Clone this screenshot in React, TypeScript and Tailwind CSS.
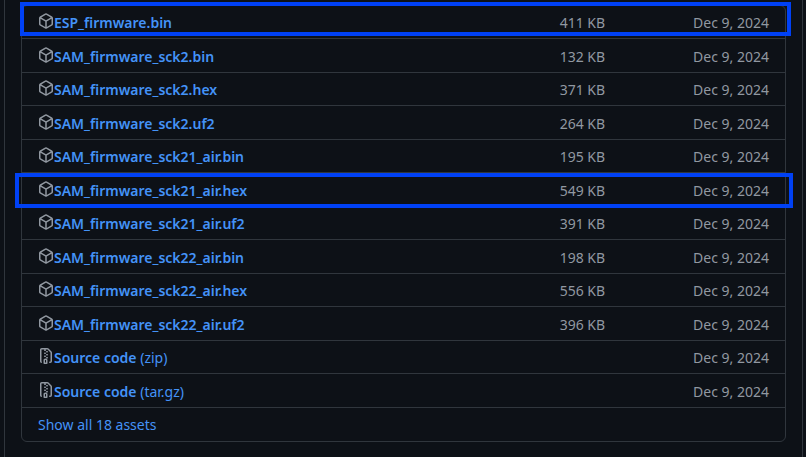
const assets = [
  { name: 'ESP_firmware.bin', size: '411 KB' },
  { name: 'SAM_firmware_sck2.bin', size: '132 KB' },
  { name: 'SAM_firmware_sck2.hex', size: '371 KB' },
  { name: 'SAM_firmware_sck2.uf2', size: '264 KB' },
  { name: 'SAM_firmware_sck21_air.bin', size: '195 KB' },
  { name: 'SAM_firmware_sck21_air.hex', size: '549 KB' },
  { name: 'SAM_firmware_sck21_air.uf2', size: '391 KB' },
  { name: 'SAM_firmware_sck22_air.bin', size: '198 KB' },
  { name: 'SAM_firmware_sck22_air.hex', size: '556 KB' },
  { name: 'SAM_firmware_sck22_air.uf2', size: '396 KB' }
]

const sources = ['zip', 'tar.gz']

const PackageIcon = () => (
  <svg width="16" height="16" viewBox="0 0 16 16" fill="currentColor">
    <path d="m8.878.392 5.25 3.045c.54.314.872.89.872 1.514v6.098a1.75 1.75 0 0 1-.872 1.514l-5.25 3.045a1.75 1.75 0 0 1-1.756 0l-5.25-3.045A1.75 1.75 0 0 1 1 11.049V4.951c0-.624.332-1.201.872-1.514L7.122.392a1.75 1.75 0 0 1 1.756 0ZM7.875 1.69l-4.63 2.685L8 7.133l4.755-2.758-4.63-2.685a.248.248 0 0 0-.25 0ZM2.5 5.677v5.372c0 .09.047.171.125.216l4.625 2.683V8.432Zm6.25 8.271 4.625-2.683a.25.25 0 0 0 .125-.216V5.677L8.75 8.432Z" />
  </svg>
)

const ZipIcon = () => (
  <svg width="16" height="16" viewBox="0 0 16 16" fill="currentColor">
    <path d="M3.5 1.75v11.5c0 .09.048.173.126.217a.75.75 0 0 1-.752 1.298A1.748 1.748 0 0 1 2 13.25V1.75C2 .784 2.784 0 3.75 0h5.586c.464 0 .909.185 1.237.513l2.914 2.914c.329.328.513.773.513 1.237v8.586A1.75 1.75 0 0 1 12.25 15h-.5a.75.75 0 0 1 0-1.5h.5a.25.25 0 0 0 .25-.25V4.664a.25.25 0 0 0-.073-.177L9.513 1.573a.25.25 0 0 0-.177-.073H7.25a.75.75 0 0 1 0 1.5h-.5a.75.75 0 0 1 0-1.5h-3a.25.25 0 0 0-.25.25Zm3.75 8.75h.5c.966 0 1.75.784 1.75 1.75v3a.75.75 0 0 1-.75.75h-2.5a.75.75 0 0 1-.75-.75v-3c0-.966.784-1.75 1.75-1.75ZM6 5.25a.75.75 0 0 1 .75-.75h.5a.75.75 0 0 1 0 1.5h-.5A.75.75 0 0 1 6 5.25Zm.75 2.25h.5a.75.75 0 0 1 0 1.5h-.5a.75.75 0 0 1 0-1.5ZM8 6.75A.75.75 0 0 1 8.75 6h.5a.75.75 0 0 1 0 1.5h-.5A.75.75 0 0 1 8 6.75ZM8.75 3h.5a.75.75 0 0 1 0 1.5h-.5a.75.75 0 0 1 0-1.5ZM8 9.75A.75.75 0 0 1 8.75 9h.5a.75.75 0 0 1 0 1.5h-.5A.75.75 0 0 1 8 9.75Zm-1 2.5v2.25h1v-2.25a.25.25 0 0 0-.25-.25h-.5a.25.25 0 0 0-.25.25Z" />
  </svg>
)

const Row = ({ icon, children, size }: { icon: React.ReactNode; children: React.ReactNode; size?: string }) => (
  <div className="flex h-[33.5px] items-center border-b border-[#30363d] px-4 pt-[2px]">
    <span className="mt-[-3px] flex w-4 shrink-0 text-[#9198a1]">{icon}</span>
    <span className="flex-1 truncate text-[#4493f8]">{children}</span>
    {size && <span className="mr-[88px] w-[70px] text-right text-[#9198a1]">{size}</span>}
    <span className="text-[#9198a1]">Dec 9, 2024</span>
  </div>
)

const App = () => {
  return (
    <div className="relative h-[457px] w-[806px] overflow-hidden bg-[#0d1117] pl-1 pr-[3px] text-[14px] font-['Noto_Sans',sans-serif]">
      <div className="h-full border-x border-[#30363d] px-4 pt-[4.5px]">
        <div className="rounded-md border border-[#30363d]">
          {assets.map((a) => (
            <Row key={a.name} icon={<PackageIcon />} size={a.size}>
              <span className="font-semibold">{a.name}</span>
            </Row>
          ))}
          {sources.map((s) => (
            <Row key={s} icon={<ZipIcon />}>
              <span className="font-semibold">Source code</span> ({s})
            </Row>
          ))}
          <div className="flex h-[33.6px] items-center px-4 text-[#4493f8]">Show all 18 assets</div>
        </div>
      </div>
      {/* blue highlight boxes drawn on top of the table */}
      <div className="absolute left-[20px] top-[2px] h-[34px] w-[771px] border-4 border-[#0041f5]" />
      <div className="absolute left-[15px] top-[173px] h-[35px] w-[778px] border-4 border-[#0041f5]" />
    </div>
  )
}

export default App
